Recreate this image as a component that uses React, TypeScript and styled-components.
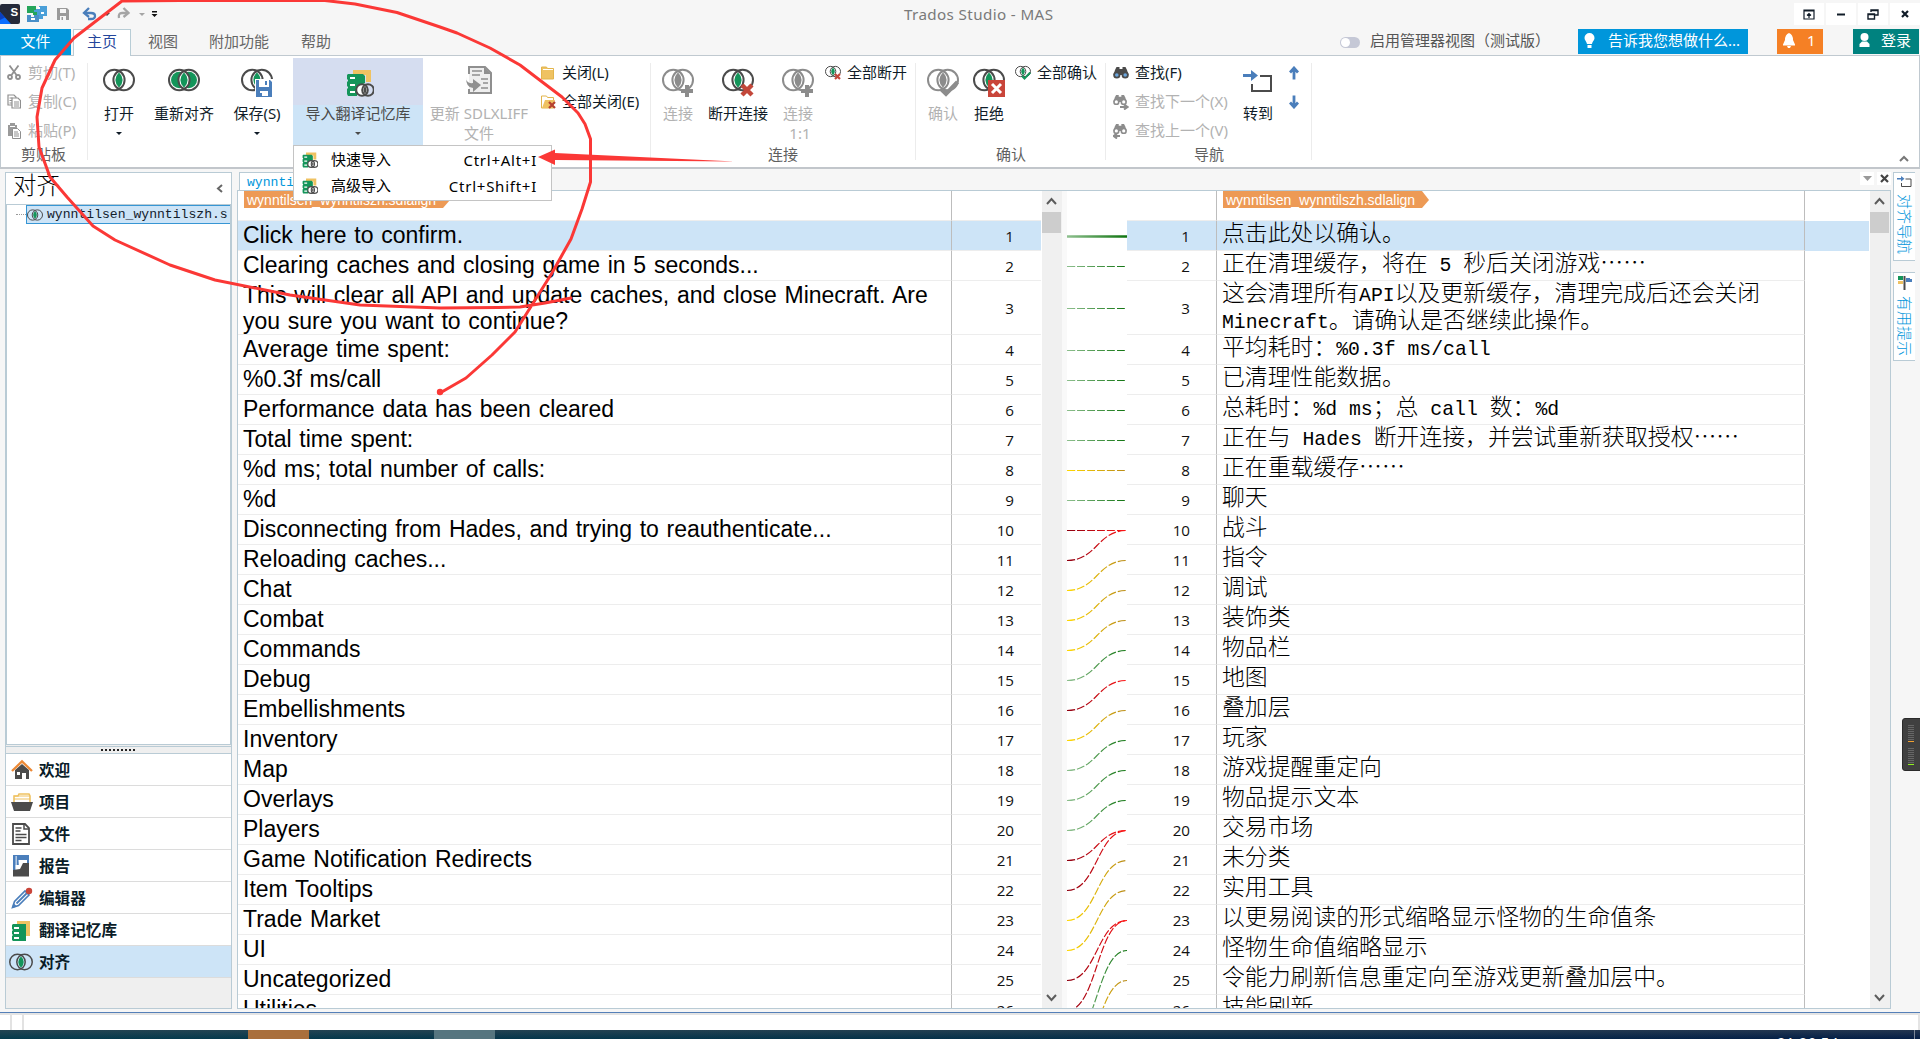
import React from "react";
import styled, { createGlobalStyle } from "styled-components";

const UI = `"Noto Sans", "Noto Sans CJK SC", sans-serif`;
const CJK = `"Noto Sans CJK SC", sans-serif`;

const Global = createGlobalStyle`
  html, body { margin: 0; padding: 0; overflow: hidden; }
  * { box-sizing: border-box; }
  body { font-family: ${UI}; font-size: 15px; color: #101c28; background: #f5f5f5; }
  svg { display: block; flex: none; }
`;

const Window = styled.div`
  position: relative;
  width: 1920px;
  height: 1039px;
  display: flex;
  flex-direction: column;
  overflow: hidden;
  background: #f6f6f6;
`;

/* ---------- title bar ---------- */
const TitleBar = styled.header`
  height: 29px;
  flex: none;
  display: flex;
  align-items: flex-start;
`;
const QuickAccess = styled.div`
  width: 904px;
  display: flex;
  padding-top: 4px;
`;
const Title = styled.div`
  flex: 1;
  line-height: 29px;
  font-size: 15.2px;
  letter-spacing: 0.38px;
  color: #7a7a7a;
  white-space: nowrap;
`;
const WindowButtons = styled.div`
  display: flex;
  gap: 2px;
  padding-top: 3px;
`;
const WinBtn = styled.div`
  width: 30px;
  height: 22px;
  background: #fff;
  display: flex;
  align-items: center;
  justify-content: center;
`;

/* ---------- tab strip ---------- */
const TabStrip = styled.nav`
  height: 27px;
  flex: none;
  display: flex;
  align-items: stretch;
  border-bottom: 1px solid #c0c9d0;
`;
const FileTab = styled.div`
  width: 71px;
  margin-right: 2px;
  background: #0096db;
  color: #fff;
  text-align: center;
  line-height: 24px;
`;
const ActiveTab = styled.div`
  width: 58px;
  margin-bottom: -1px;
  background: #fff;
  border: 1px solid #b8cdd6;
  border-bottom: 0;
  color: #24469c;
  text-align: center;
  line-height: 23px;
`;
const Tab = styled.div<{ $w: number }>`
  width: ${(p) => p.$w}px;
  line-height: 24px;
  color: #666;
  white-space: nowrap;
`;
const TabSpace = styled.div<{ $w?: number }>`
  flex: ${(p) => (p.$w ? "none" : 1)};
  width: ${(p) => p.$w ?? 0}px;
`;
const ToggleWrap = styled.div`
  width: 30px;
  padding-top: 8px;
`;
const Toggle = styled.div`
  width: 20px;
  height: 11px;
  border-radius: 6px;
  background: #c5c8d6;
  padding: 1px;
  &::before {
    content: "";
    display: block;
    width: 9px;
    height: 9px;
    border-radius: 50%;
    background: #fff;
  }
`;
const ManagerLabel = styled.div`
  width: 208px;
  line-height: 23px;
  color: #555;
  white-space: nowrap;
`;
const Chip = styled.div<{ $w: number; $bg: string; $gap: number; $pad: number }>`
  width: ${(p) => p.$w}px;
  height: 25px;
  background: ${(p) => p.$bg};
  color: #fff;
  display: flex;
  align-items: center;
  gap: ${(p) => p.$gap}px;
  padding: 0 0 2px ${(p) => p.$pad}px;
  line-height: 23px;
  white-space: nowrap;
`;

/* ---------- ribbon ---------- */
const Ribbon = styled.section`
  height: 113px;
  flex: none;
  display: flex;
  background: #fff;
  border: 1px solid #c0c9d0;
  border-top: 0;
  border-bottom: 2px solid #c2c6cb;
  padding: 2px 0 0 0;
`;
const Group = styled.div<{ $w: number }>`
  width: ${(p) => p.$w}px;
  height: 97px;
  margin-top: 5px;
  border-right: 1px solid #ececec;
  display: flex;
  flex-direction: column;
  flex: none;
`;
const GroupBody = styled.div`
  height: 82px;
  display: flex;
  margin-top: -5px;
`;
const GroupLabel = styled.div<{ $x: number }>`
  padding-left: ${(p) => p.$x}px;
  margin-top: 2px;
  line-height: 24px;
  color: #5f5f5f;
`;
const Big = styled.div<{ $w: number; $ml?: number; $off?: boolean }>`
  position: relative;
  width: ${(p) => p.$w}px;
  height: 88px;
  margin-left: ${(p) => p.$ml ?? 0}px;
  flex: none;
  display: flex;
  flex-direction: column;
  align-items: center;
  color: ${(p) => (p.$off ? "#b2b2b2" : "inherit")};
  text-align: center;
`;
const Active = styled(Big)`
  background: linear-gradient(#d5ddf0 0 47px, #cde4f7 47px);
  color: #4a4a4a;
`;
const BigIcon = styled.div<{ $top?: number; $dx?: number }>`
  height: 46px;
  padding-top: ${(p) => p.$top ?? 9}px;
  padding-left: ${(p) => p.$dx ?? 0}px;
`;
const BigText = styled.div`
  line-height: 19.5px;
  white-space: pre;
`;
const Caret = styled.i<{ $c?: string }>`
  margin-top: 8.5px;
  border: 3px solid transparent;
  border-top-color: ${(p) => p.$c ?? "#101c28"};
  border-bottom: 0;
`;
const SmallCol = styled.div<{ $ml: number; $gap: number }>`
  margin-left: ${(p) => p.$ml}px;
  display: flex;
  flex-direction: column;
  --gap: ${(p) => p.$gap}px;
`;
const Small = styled.div<{ $off?: boolean }>`
  height: 29px;
  flex: none;
  display: flex;
  align-items: center;
  gap: var(--gap);
  color: ${(p) => (p.$off ? "#b2b2b2" : "inherit")};
  white-space: nowrap;
  & > span { line-height: 20px; padding-bottom: 2px; }
`;
const Collapse = styled.div`
  flex: 1;
  display: flex;
  align-items: flex-end;
  justify-content: flex-end;
  padding: 0 10px 5px 0;
`;
const Menu = styled.div`
  position: absolute;
  z-index: 5;
  left: 0;
  top: 87px;
  width: 259px;
  height: 56px;
  background: #fff;
  border: 1px solid #c4c4c4;
  padding: 1px 14px 0 8px;
  color: #000;
`;
const MenuItem = styled.div`
  height: 26px;
  display: flex;
  align-items: center;
  font-size: 15px;
  & > span { line-height: 20px; padding-bottom: 2px; }
  & > span:last-child { margin-left: auto; letter-spacing: 0.75px; padding-bottom: 0; }
  & > svg + span { margin-left: 13px; }
`;

/* ---------- work area ---------- */
const Work = styled.main`
  height: 843px;
  flex: none;
  display: flex;
  padding: 3px 0 3px 5px;
`;
const Side = styled.aside`
  width: 227px;
  height: 837px;
  flex: none;
  display: flex;
  flex-direction: column;
  border: 1px solid #b9cbd5;
  background: #efefef;
`;
const SideHead = styled.div`
  height: 32px;
  flex: none;
  background: #fff;
  display: flex;
  justify-content: space-between;
  align-items: center;
  padding: 0 8px 1px 7px;
  border-bottom: 1px solid #b9cbd5;
  font-family: ${CJK};
  font-weight: 300;
  font-size: 23.5px;
  color: #000;
  & > span { line-height: 24px; padding-bottom: 8px; }
`;
const Tree = styled.div`
  height: 540px;
  flex: none;
  background: #fff;
  border: 1px solid #b9cbd5;
  border-top: 0;
  display: flex;
  align-items: flex-start;
  padding-left: 9px;
`;
const TreeDots = styled.div`
  width: 10px;
  margin-top: 9px;
  border-top: 1px dotted #999;
`;
const TreeItem = styled.div`
  flex: 1;
  height: 19px;
  overflow: hidden;
  display: flex;
  align-items: center;
  gap: 4px;
  border: 1px solid #3796d4;
  border-right: 0;
  background: #cde4f7;
  font: 13.1px "Liberation Mono", monospace;
  color: #12202c;
`;
const Splitter = styled.div`
  height: 8px;
  flex: none;
  display: flex;
  justify-content: center;
  align-items: flex-start;
  padding-top: 2px;
  border-top: 1px solid #b9cbd5;
  border-bottom: 1px solid #b9cbd5;
  margin-top: 1px;
`;
const Grip = styled.div`
  width: 34px;
  height: 2px;
  margin-right: 2px;
  background: repeating-linear-gradient(90deg, #222 0 2px, transparent 2px 4px);
`;
const NavItem = styled.div<{ $on?: boolean }>`
  height: 32px;
  flex: none;
  display: flex;
  align-items: center;
  background: ${(p) => (p.$on ? "#cde4f7" : "#fff")};
  border-bottom: 1px solid #dcdcdc;
  font-family: ${CJK};
  font-weight: 600;
  font-size: 15.6px;
  color: #0a1c28;
  padding-left: 3px;
  & > span { line-height: 20px; padding-bottom: 2px; }
`;
const NavIcon = styled.div<{ $pl: number }>`
  width: 30px;
  padding: 1px 0 0 ${(p) => p.$pl}px;
`;

const Editor = styled.section`
  width: 1654px;
  margin-left: 5px;
  flex: none;
  display: flex;
  flex-direction: column;
`;
const EditorTabs = styled.div`
  height: 18px;
  display: flex;
  justify-content: space-between;
`;
const DocTab = styled.div`
  width: 120px;
  margin-left: 2px;
  height: 18px;
  overflow: hidden;
  background: #fff;
  border: 1px solid #b9cbd5;
  border-bottom: 0;
  padding-left: 7px;
  font: 13.1px/20px "Liberation Mono", monospace;
  color: #0096db;
`;
const DocButtons = styled.div`
  display: flex;
  gap: 3px;
`;
const DocBtn = styled.div`
  width: 14px;
  height: 13px;
  background: #fff;
  display: flex;
  align-items: center;
  justify-content: center;
`;
const Frame = styled.div`
  height: 819px;
  display: flex;
  overflow: hidden;
  border: 1px solid #b9cbd5;
  background: #fff;
`;
const Grid = styled.div`
  flex: none;
  display: flex;
  flex-direction: column;
`;
const HeadRow = styled.div`
  height: 30px;
  flex: none;
  display: flex;
`;
const Row = styled.div<{ $h: number; $on: boolean }>`
  height: ${(p) => p.$h}px;
  flex: none;
  display: flex;
  background: ${(p) => (p.$on ? "#cde4f7" : "transparent")};
`;
const Line = styled.div<{ $w: number }>`
  width: ${(p) => p.$w}px;
  flex: none;
  border-bottom: 1px solid #ededed;
`;
const SourceCell = styled(Line)`
  border-right: 1px solid #bdbdbd;
  padding: 1px 0 0 5px;
  font: 23px/26px "Liberation Sans", Arial, sans-serif;
  word-spacing: 1.35px;
  color: #000;
  white-space: pre;
`;
const TargetCell = styled(Line)`
  border-right: 1px solid #bdbdbd;
  padding-left: 5px;
  font: 300 22.85px/27px ${CJK};
  color: #000;
  & > div { height: 27px; margin-top: -3px; white-space: pre; }
  & > div + div { margin-top: 0; }
`;
const Latin = styled.span`
  font-family: "Liberation Mono", monospace;
  font-weight: 400;
  font-size: 19.8px;
`;
const NumCell = styled(Line)<{ $pr: number; $br?: boolean }>`
  padding-right: ${(p) => p.$pr}px;
  border-right: ${(p) => (p.$br ? "1px solid #bdbdbd" : "0")};
  display: flex;
  align-items: center;
  justify-content: flex-end;
  font: 15.2px "Open Sans", sans-serif;
  color: #111;
`;
const Scroll = styled.div<{ $w: number }>`
  width: ${(p) => p.$w}px;
  flex: none;
  display: flex;
  flex-direction: column;
  align-items: center;
  justify-content: space-between;
  background: #f0f0f0;
  padding: 6px 1px 6px 0;
`;
const ThumbBox = styled.div`
  display: flex;
  flex-direction: column;
  align-items: center;
  gap: 7px;
`;
const Thumb = styled.div`
  width: 19px;
  height: 21px;
  background: #cdcdcd;
`;
const Gutter = styled.div`
  width: 5px;
  background: #f9f9f9;
`;
const Badge = styled.div<{ $ml: number }>`
  height: 17px;
  margin-left: ${(p) => p.$ml}px;
  width: 206px;
  background: #ed9a55;
  clip-path: polygon(0 0, 199px 0, 206px 9px, 199px 17px, 0 17px);
  padding-left: 3px;
  font: 14px/18px "Liberation Sans", Arial, sans-serif;
  color: #fff;
`;
const HeadCell = styled.div<{ $w: number; $line?: boolean }>`
  width: ${(p) => p.$w}px;
  flex: none;
  border-right: ${(p) => (p.$line ? "1px solid #bdbdbd" : "0")};
  border-bottom: 1px solid #ededed;
`;
const Plain = styled.div<{ $w: number }>`
  width: ${(p) => p.$w}px;
`;

const Rail = styled.div`
  margin-left: 2px;
  display: flex;
  flex-direction: column;
  gap: 11px;
`;
const RailTab = styled.div<{ $h: number }>`
  width: 22px;
  height: ${(p) => p.$h}px;
  border: 1px solid #b9cbd5;
  border-right: 0;
  background: #fff;
  display: flex;
  flex-direction: column;
  align-items: center;
  gap: 6px;
  padding-top: 3px;
`;
const RailText = styled.div`
  writing-mode: vertical-rl;
  text-orientation: sideways;
  font: 300 15px/20px ${CJK};
  color: #0096db;
`;
const Meter = styled.div`
  position: absolute;
  left: 1902px;
  top: 718px;
  width: 20px;
  height: 53px;
  border: 1px solid #2a2a2a;
  border-radius: 3px 0 0 3px;
  background: #404040;
  padding: 6px 0 0 5px;
`;
const Bars = styled.div<{ $c: string }>`
  width: 6px;
  height: 17px;
  margin-bottom: 6px;
  background: linear-gradient(transparent 16px, ${(p) => p.$c} 16px), repeating-linear-gradient(#666 0 1px, #404040 1px 2px);
`;

/* ---------- bottom ---------- */
const Status = styled.footer`
  height: 17px;
  flex: none;
  display: flex;
  background: #fff;
  border-top: 2px solid #e4e4e4;
  border-right: 2px solid #e4e4e4;
  padding-left: 10px;
  gap: 10px;
  & > i { width: 2px; background: #e2e2e2; }
`;
const BlueLine = styled.div`
  height: 1px;
  flex: none;
  background: #5580b8;
`;
const TaskBar = styled.div`
  height: 10px;
  flex: none;
  display: flex;
  overflow: hidden;
  background: linear-gradient(rgba(70, 80, 90, 0.5), transparent), linear-gradient(90deg, #003a4c, #003048 45%, #001a45);
`;
const Task = styled.div<{ $w: number; $c?: string }>`
  width: ${(p) => p.$w}px;
  flex: none;
  background: ${(p) => p.$c ?? "transparent"};
`;
const Clock = styled.div`
  width: 137px;
  padding-top: 4px;
  font: 15.5px/20px "Open Sans", sans-serif;
  color: #fff;
`;
const ShowDesktop = styled.div`
  width: 6px;
  border-left: 1px solid #7c8798;
`;
const Ink = styled.svg`
  position: absolute;
  left: 0;
  top: 0;
  z-index: 10;
  pointer-events: none;
`;

/* ---------- icons ---------- */
type VennProps = { w?: number; color?: string; lens?: string; sides?: boolean; badge?: React.ReactNode };
const Venn = ({ w = 32, color = "#4b4b4b", lens = "#14955a", sides, badge }: VennProps) => (
  <svg width={w} height={(w * 30) / 32} viewBox="0 0 32 30">
    {sides && (
      <g fill={lens}>
        <circle cx="11.3" cy="13" r="8.3" />
        <circle cx="20.7" cy="13" r="8.3" />
        <path d="M16 2.5Q26.5 13 16 23.5Q5.500 13 16 2.500Z" fill="#fff" />
      </g>
    )}
    <path d="M16 5.200Q23.300 13 16 20.800Q8.700 13 16 5.200Z" fill={lens} />
    <g fill="none" stroke={color} strokeWidth="2">
      <circle cx="11.300" cy="13" r="10.300" />
      <circle cx="20.700" cy="13" r="10.300" />
    </g>
    {badge}
  </svg>
);
/* small Venn centred on its circles, for list rows */
const VennFlat = ({ w }: { w: number }) => (
  <svg width={w} height={(w * 24) / 32} viewBox="0 1 32 24">
    <path d="M16 5.200Q23.300 13 16 20.800Q8.700 13 16 5.200Z" fill="#14955a" />
    <g fill="none" stroke="#4b4b4b" strokeWidth="2">
      <circle cx="11.300" cy="13" r="10.300" />
      <circle cx="20.700" cy="13" r="10.300" />
    </g>
  </svg>
);
const Plus = <path d="M19 24h12M25 18v12" stroke="#8c8c8c" strokeWidth="4" />;
const Cross = <path d="M20 18l10 10M30 18l-10 10" stroke="#c3473a" strokeWidth="4.400" />;
const RejectBox = (
  <g>
    <rect x="15" y="13" width="17" height="17" fill="#c9453a" />
    <path d="M19 17l9 9M28 17l-9 9" stroke="#fff" strokeWidth="3" />
  </g>
);
const Tick = (c: string) => <path d="M14 22l5 5L30.500 15" fill="none" stroke={c} strokeWidth="4" />;
const Disk = (
  <g>
    <path d="M14 12h18v18h-18z" fill="#fff" />
    <path d="M15 13h3v7h10v-7h1l2 2v15h-16z" fill="#4a7ebb" />
    <path d="M18 13h9v6h-9z" fill="#fff" />
    <path d="M24 14h2v4h-2z" fill="#4a7ebb" />
    <path d="M19 24h8v5h-6v-3h-2z" fill="#fff" />
  </g>
);

const MemoryIcon = ({ w = 28 }: { w?: number }) => (
  <svg width={w} height={w} viewBox="0 0 28 28">
    <path d="M7 1h18v12h-5V6H7z" fill="#efc262" />
    <path d="M2 5h15l2 2v7l-8 4v9H2l-1-2v-5l1-1v-1l-1-1v-4l1-1v-1L1 10V6z" fill="#14955a" />
    <path d="M4 9h5M4 16h5M4 23h5" stroke="#fff" strokeWidth="2" />
    <g fill="#fff" stroke="#4b4b4b" strokeWidth="2">
      <circle cx="16" cy="21" r="5.800" />
      <circle cx="22" cy="21" r="5.800" fill="none" />
    </g>
    <path d="M19 17q3 4 0 8q-3-4 0-8" fill="#4b4b4b" />
  </svg>
);
const UpdateIcon = () => (
  <svg width="28" height="30" viewBox="0 0 28 30">
    <path d="M4 9V2h16l6 6v20H4v-4" fill="#eee" stroke="#8f8f8f" strokeWidth="2" />
    <path d="M19 2v7h7z" fill="#8f8f8f" />
    <path d="M7 6h10M7 10h8M16 14h7M18 18h5M16 23h7" stroke="#8f8f8f" strokeWidth="1.600" />
    <path d="M1 12q0 7 7 6v-4l8 6-8 7v-4Q1 23 1 12z" fill="#8f8f8f" />
  </svg>
);
const Scissors = () => (
  <svg width="14" height="15" viewBox="0 0 14 15" fill="none" stroke="#8f8f8f" strokeWidth="1.800">
    <path d="M2.500 0.500L9.500 10M11.500 0.500L4.500 10" />
    <circle cx="3" cy="12" r="2" />
    <circle cx="11" cy="12" r="2" />
  </svg>
);
const CopyIcon = () => (
  <svg width="14" height="15" viewBox="0 0 14 15" fill="#fff" stroke="#8f8f8f" strokeWidth="1.200">
    <path d="M1 1h6l2 2v8H1zM2.500 4h3M2.500 6.500h3M2.500 9h3" />
    <path d="M5 4h6l2.500 2.500V14H5zM7 8h5M7 10h5M7 12h5" />
  </svg>
);
const PasteIcon = () => (
  <svg width="14" height="17" viewBox="0 0 14 17">
    <path d="M1 3h2V1h5v2h2v4H5v7H1z" fill="#9a9a9a" />
    <path d="M3 4.500h5" stroke="#fff" />
    <path d="M5.500 6.500h5l3 3v7h-8z" fill="#fff" stroke="#8f8f8f" />
    <path d="M7 10h4M7 12h5M7 14h5" stroke="#8f8f8f" />
  </svg>
);
const FolderIcon = ({ x }: { x?: boolean }) => (
  <svg width="15" height="14" viewBox="0 0 15 14">
    <path d="M.5 13V1h5l1 1.500h6V13z" fill={x ? "#fff" : "#efc262"} stroke="#e2b54c" />
    {x ? <path d="M1 13L4 5h10l-2 8z" fill="#efc262" /> : <path d="M2 3.500h10" stroke="#fff" />}
    {x && <path d="M8 7l6 6M14 7l-6 6" stroke="#b5402f" strokeWidth="2.200" />}
  </svg>
);
const Binoculars = ({ c = "#4b4b4b", eye = "#6aa5dc", dir = 0 }: { c?: string; eye?: string; dir?: number }) => (
  <svg width="16" height="16" viewBox="0 0 16 16">
    <g transform={dir ? "scale(.88)" : "translate(0 1)"}>
      <path d="M2 4L3.500 1h3v2h3V1h3L14 4l1.500 5H.5z" fill={c} />
      <circle cx="3.800" cy="9" r="3.600" fill={c} />
      <circle cx="12.200" cy="9" r="3.600" fill={c} />
      <circle cx="3.800" cy="9" r="1.800" fill={eye} />
      <circle cx="12.200" cy="9" r="1.800" fill={eye} />
    </g>
    {dir === 1 && <path d="M7 13h6M11 10.500l3.500 2.500-3.500 2.500" fill="none" stroke={c} strokeWidth="2" />}
    {dir === -1 && <path d="M7 13H1.500M4 10.500L.8 13 4 15.500" fill="none" stroke={c} strokeWidth="2" />}
  </svg>
);
const GotoIcon = ({ w = 30 }: { w?: number }) => (
  <svg width={w} height={(w * 24) / 30} viewBox="0 0 30 24">
    <path d="M17 6h11v15H9v-7" fill="none" stroke="#4b4b4b" strokeWidth="2" />
    <path d="M0 4h8V0l7 5.500L8 11V7H0z" fill="#4a7ebb" />
  </svg>
);
const ArrowUp = () => (
  <svg width="10" height="14" viewBox="0 0 10 14">
    <path d="M5 13.500V3M1 6.500L5 2l4 4.500" fill="none" stroke="#4a7ebb" strokeWidth="2.800" />
  </svg>
);
const ArrowDown = () => (
  <svg width="10" height="14" viewBox="0 0 10 14">
    <path d="M5 .5V11M1 7.500L5 12l4-4.500" fill="none" stroke="#4a7ebb" strokeWidth="2.800" />
  </svg>
);
const Chevron = ({ d, w = 11, h = 8, c = "#5c5c5c", s = 2 }: { d: string; w?: number; h?: number; c?: string; s?: number }) => (
  <svg width={w} height={h} viewBox={`0 0 ${w} ${h}`}>
    <path d={d} fill="none" stroke={c} strokeWidth={s} />
  </svg>
);
const UP = "M1 7L5.500 2L10 7";
const DOWN = "M1 1L5.500 6L10 1";

const QuickIcons = () => (
  <svg width="165" height="22" viewBox="0 4 165 22">
    <rect x="0" y="4" width="20" height="20" rx="2" fill="#252a3a" />
    <path d="M0 12v12h11z" fill="#0a6cff" />
    <path d="M0 12l5 5.500L0 20z" fill="#0b3fc0" />
    <text x="10.500" y="15.500" fontFamily="Liberation Sans" fontWeight="700" fontSize="11.500" fill="#fff">S</text>
    <path d="M27 6h9v3h3V6h8v10h-4v3h-4v-4h-3v-3h-9z" fill="#4a9fd8" />
    <path d="M27 6h9v4h-2v2h3v3h-4v-2h-6z" fill="#25a55a" />
    <path d="M27 15h4v2h3v-2h5v7H27z" fill="#4a8fc8" />
    <path d="M31 19h4M38 8h2M41 13h3" stroke="#fff" strokeWidth="2" />
    <path d="M57 8h10l2 2v10H57z" fill="#9a9a9a" />
    <path d="M60 9h6v4h-6zM60 16h6v4h-6z" fill="#f6f6f6" />
    <path d="M61.500 17h1.500v3h-1.500z" fill="#9a9a9a" />
    <path d="M85 13h6q4 0 4 3t-4 3h-3" fill="none" stroke="#4a7ebb" strokeWidth="2.300" />
    <path d="M89 8l-5 5 5 4" fill="none" stroke="#4a7ebb" strokeWidth="2.300" />
    <path d="M104 13h6l-3 3z" fill="#444" />
    <path d="M128 13h-6q-4 0-3 5" fill="none" stroke="#a5a5a5" strokeWidth="2.300" />
    <path d="M123.500 8l5 5-5 4" fill="none" stroke="#a5a5a5" strokeWidth="2.300" />
    <path d="M139 13h6l-3 3z" fill="#a5a5a5" />
    <path d="M152 11h5v1.500h-5zM151.500 14h6l-3 3z" fill="#111" />
  </svg>
);

const HomeI = () => (
  <svg width="22" height="22" viewBox="0 0 22 22">
    <path d="M4 11l7-6 7 6v9h-3v-6h-4v6H4z" fill="#4b4b4b" />
    <path d="M6 13h3v3H6z" fill="#fff" />
    <path d="M1 12L11 2.500 21 12" fill="none" stroke="#ec8936" strokeWidth="2.400" />
  </svg>
);
const ProjectI = () => (
  <svg width="22" height="22" viewBox="0 0 22 22">
    <path d="M3 11V5h4l1-2h10l1 2v6" fill="#fff" stroke="#efc262" strokeWidth="1.600" />
    <path d="M3 5h16M3 8h16" stroke="#efc262" />
    <path d="M0 11h22l-3 9H3z" fill="#4b4b4b" />
  </svg>
);
const FileI = () => (
  <svg width="20" height="22" viewBox="0 0 20 22">
    <path d="M2 1h12l4 4v16H2z" fill="#fff" stroke="#4b4b4b" strokeWidth="1.800" />
    <path d="M13 1v5h5M4.500 5h6M4.500 8h5M4.500 11.500h11M4.500 14.500h11M4.500 17.500h6" fill="none" stroke="#4b4b4b" strokeWidth="1.500" />
  </svg>
);
const ReportI = () => (
  <svg width="20" height="22" viewBox="0 0 20 22">
    <path d="M2 0h16v10H2z" fill="#4a7ebb" />
    <path d="M5 1v13" stroke="#fff" strokeWidth="1.200" />
    <path d="M2 1h2.400v14H2z" fill="#4a7ebb" />
    <path d="M7.500 5H16v3l-3 1-5 4.500z" fill="#fff" />
    <path d="M2 21.500V15l7-1 3-6h6v13.500z" fill="#4b4b4b" />
  </svg>
);
const PencilI = () => (
  <svg width="22" height="22" viewBox="0 0 22 22">
    <path d="M1.500 20.500l2-6L14 4l4 4L7.500 18.500z" fill="#fff" stroke="#4a7ebb" strokeWidth="1.600" />
    <path d="M5.500 16.500L16 6" stroke="#4a7ebb" strokeWidth="1.800" />
    <path d="M1 21l1.500-5 3.500 3.500z" fill="#4a7ebb" />
    <circle cx="18" cy="4" r="3.200" fill="#c9453a" />
  </svg>
);
const MemI = () => (
  <svg width="20" height="22" viewBox="0 0 20 22">
    <path d="M6 2h13v15h-5V6H6z" fill="#efc262" />
    <path d="M2 5h13v17H2l-1-1v-4l1-1-1-1v-3l1-1-1-1V6z" fill="#14955a" />
    <path d="M3 9h5M3 14h5M3 19h5" stroke="#fff" strokeWidth="2" />
  </svg>
);

/* ---------- data ---------- */
const source = [
  "Click here to confirm.",
  "Clearing caches and closing game in 5 seconds...",
  "This will clear all API and update caches, and close Minecraft. Are\nyou sure you want to continue?",
  "Average time spent:",
  "%0.3f ms/call",
  "Performance data has been cleared",
  "Total time spent:",
  "%d ms; total number of calls:",
  "%d",
  "Disconnecting from Hades, and trying to reauthenticate...",
  "Reloading caches...",
  "Chat", "Combat", "Commands", "Debug", "Embellishments", "Inventory", "Map", "Overlays", "Players",
  "Game Notification Redirects", "Item Tooltips", "Trade Market", "UI", "Uncategorized", "Utilities",
];
const target = [
  "点击此处以确认。",
  "正在清理缓存，将在 5 秒后关闭游戏……",
  "这会清理所有API以及更新缓存，清理完成后还会关闭\nMinecraft。请确认是否继续此操作。",
  "平均耗时：%0.3f ms/call",
  "已清理性能数据。",
  "总耗时：%d ms；总 call 数：%d",
  "正在与 Hades 断开连接，并尝试重新获取授权……",
  "正在重载缓存……",
  "聊天", "战斗", "指令", "调试", "装饰类", "物品栏", "地图", "叠加层", "玩家",
  "游戏提醒重定向", "物品提示文本", "交易市场", "未分类", "实用工具",
  "以更易阅读的形式缩略显示怪物的生命值条",
  "怪物生命值缩略显示",
  "令能力刷新信息重定向至游戏更新叠加层中。",
  "技能刷新",
];
const rowHeight = (i: number) => (i === 2 ? 54 : 30);
const center = (n: number) => (n === 1 ? 45.5 : n === 2 ? 75.5 : n === 3 ? 117.5 : 159.5 + (n - 4) * 30);
const links: [number, number, string][] = [
  [2, 2, "g"], [3, 3, "g"], [4, 4, "g"], [5, 5, "g"], [6, 6, "g"], [7, 7, "g"], [8, 8, "y"], [9, 9, "g"],
  [10, 10, "r"], [11, 10, "r"], [12, 11, "y"], [13, 12, "y"], [14, 13, "y"], [15, 14, "g"], [16, 15, "r"],
  [17, 16, "y"], [18, 17, "g"], [19, 18, "g"], [20, 19, "g"], [21, 20, "r"], [22, 20, "r"], [23, 21, "y"],
  [24, 22, "y"], [25, 23, "r"], [26, 23, "r"], [27, 24, "g"], [28, 25, "y"],
];
const ramps: Record<string, [string, string]> = {
  g: ["#8fc08f", "#0e730e"],
  y: ["#ffd800", "#b88a18"],
  r: ["#8f0010", "#ff1616"],
};

const mixed = (line: string) =>
  line.split(/([\x20-\x7e]+)/).map((part, i) => (i % 2 ? <Latin key={i}>{part}</Latin> : part));

const Links = () => (
  <svg width="60" height="817" viewBox="0 0 60 817">
    <defs>
      {Object.entries(ramps).map(([k, [a, b]]) => (
        <linearGradient key={k} id={k} gradientUnits="userSpaceOnUse" x1="0" y1="0" x2="60" y2="0">
          <stop offset="0" stopColor={a} />
          <stop offset="1" stopColor={b} />
        </linearGradient>
      ))}
    </defs>
    <path d="M0 45.500H60" stroke="url(#g)" strokeWidth="2.400" />
    {links.map(([a, b, k]) => (
      <path
        key={`${a}-${b}`}
        d={`M0 ${center(a)}C30 ${center(a)} 30 ${center(b)} 60 ${center(b)}`}
        fill="none"
        stroke={`url(#${k})`}
        strokeWidth="1.150"
        strokeDasharray="8 2"
      />
    ))}
  </svg>
);

const ScrollBar = ({ w }: { w: number }) => (
  <Scroll $w={w}>
    <ThumbBox>
      <Chevron d={UP} />
      <Thumb />
    </ThumbBox>
    <Chevron d={DOWN} />
  </Scroll>
);

const navItems: [string, React.ReactNode][] = [
  ["欢迎", <HomeI />], ["项目", <ProjectI />], ["文件", <FileI />], ["报告", <ReportI />],
  ["编辑器", <PencilI />], ["翻译记忆库", <MemI />],
];

export default function App() {
  return (
    <Window>
      <Global />
      <TitleBar>
        <QuickAccess><QuickIcons /></QuickAccess>
        <Title>Trados Studio - MAS</Title>
        <WindowButtons>
          <WinBtn>
            <svg width="12" height="11" viewBox="0 0 12 11"><path d="M1 1h10v9H1zM1 2h10M6 9V4.500M4 6.500l2-2 2 2" fill="none" stroke="#111c28" strokeWidth="1.200" /></svg>
          </WinBtn>
          <WinBtn><svg width="8" height="3"><path d="M0 1.500h8" stroke="#111c28" strokeWidth="2" /></svg></WinBtn>
          <WinBtn>
            <svg width="12" height="11" viewBox="0 0 12 11"><path d="M4 3V1h7v5H8M1 5h6.500v5H1zM1 5.500h6M4 1.500h7" fill="none" stroke="#111c28" strokeWidth="1.400" /></svg>
          </WinBtn>
          <WinBtn><svg width="8" height="8"><path d="M1 1l6 6M7 1L1 7" stroke="#111c28" strokeWidth="2.200" /></svg></WinBtn>
        </WindowButtons>
      </TitleBar>

      <TabStrip>
        <FileTab>文件</FileTab>
        <ActiveTab>主页</ActiveTab>
        <TabSpace $w={17} />
        <Tab $w={61}>视图</Tab>
        <Tab $w={92}>附加功能</Tab>
        <Tab $w={60}>帮助</Tab>
        <TabSpace />
        <ToggleWrap><Toggle /></ToggleWrap>
        <ManagerLabel>启用管理器视图（测试版）</ManagerLabel>
        <Chip $w={170} $bg="#0096db" $gap={13} $pad={6}>
          <svg width="11" height="15" viewBox="0 0 11 15"><path d="M5.500 0a5 5 0 0 1 5 5c0 2.500-2 3-2.500 6H3C2.500 8 .5 7.500.5 5a5 5 0 0 1 5-5zM3.500 12h4v3h-4z" fill="#fff" /></svg>
          告诉我您想做什么...
        </Chip>
        <TabSpace $w={29} />
        <Chip $w={46} $bg="#f58025" $gap={12} $pad={6}>
          <svg width="12" height="15" viewBox="0 0 12 15"><path d="M6 0q4 1.500 4 7l2 4.500v1H0v-1L2 7Q2 1.500 6 0zM4 13h4l-1 2H5z" fill="#fff" /></svg>
          1
        </Chip>
        <TabSpace $w={30} />
        <Chip $w={66} $bg="#00827f" $gap={11} $pad={6}>
          <svg width="11" height="15" viewBox="0 0 11 15"><circle cx="5.500" cy="4" r="4" fill="#fff" /><path d="M.5 14V11l2.500-2.500h5L10.500 11v3z" fill="#fff" /></svg>
          登录
        </Chip>
        <TabSpace $w={1} />
      </TabStrip>

      <Ribbon>
        <Group $w={87}>
          <GroupBody>
            <SmallCol $ml={6} $gap={7}>
              <Small $off><Scissors /><span>剪切(T)</span></Small>
              <Small $off><CopyIcon /><span>复制(C)</span></Small>
              <Small $off><PasteIcon /><span>粘贴(P)</span></Small>
            </SmallCol>
          </GroupBody>
          <GroupLabel $x={20}>剪贴板</GroupLabel>
        </Group>
        <Group $w={563}>
          <GroupBody>
            <Big $w={44} $ml={9}><BigIcon><Venn /></BigIcon><BigText>打开</BigText><Caret /></Big>
            <Big $w={78} $ml={4}><BigIcon><Venn sides /></BigIcon><BigText>重新对齐</BigText></Big>
            <Big $w={56} $ml={6}><BigIcon><Venn badge={Disk} /></BigIcon><BigText>保存(S)</BigText><Caret /></Big>
            <Active $w={130} $ml={8}>
              <BigIcon $top={11} $dx={3}><MemoryIcon /></BigIcon><BigText>导入翻译记忆库</BigText><Caret $c="#4a4a4a" />
              <Menu>
                <MenuItem><MemoryIcon w={16} /><span>快速导入</span><span>Ctrl+Alt+I</span></MenuItem>
                <MenuItem><MemoryIcon w={16} /><span>高级导入</span><span>Ctrl+Shift+I</span></MenuItem>
              </Menu>
            </Active>
            <Big $w={108} $ml={2} $off><BigIcon $top={7}><UpdateIcon /></BigIcon><BigText>{"更新 SDLXLIFF\n文件"}</BigText></Big>
            <SmallCol $ml={8} $gap={6}>
              <Small><FolderIcon /><span>关闭(L)</span></Small>
              <Small><FolderIcon x /><span>全部关闭(E)</span></Small>
            </SmallCol>
          </GroupBody>
        </Group>
        <Group $w={265}>
          <GroupBody>
            <Big $w={44} $ml={5} $off><BigIcon><Venn color="#8c8c8c" lens="#8c8c8c" badge={Plus} /></BigIcon><BigText>连接</BigText></Big>
            <Big $w={66} $ml={5}><BigIcon><Venn badge={Cross} /></BigIcon><BigText>断开连接</BigText></Big>
            <Big $w={44} $ml={5} $off><BigIcon><Venn color="#8c8c8c" lens="#8c8c8c" badge={Plus} /></BigIcon><BigText>{"连接\n 1:1"}</BigText></Big>
            <SmallCol $ml={5} $gap={6}>
              <Small><Venn w={16} badge={Cross} /><span>全部断开</span></Small>
            </SmallCol>
          </GroupBody>
          <GroupLabel $x={117}>连接</GroupLabel>
        </Group>
        <Group $w={190}>
          <GroupBody>
            <Big $w={44} $ml={5} $off><BigIcon><Venn color="#8c8c8c" lens="#8c8c8c" badge={Tick("#8c8c8c")} /></BigIcon><BigText>确认</BigText></Big>
            <Big $w={44} $ml={2}><BigIcon><Venn badge={RejectBox} /></BigIcon><BigText>拒绝</BigText></Big>
            <SmallCol $ml={4} $gap={6}>
              <Small><Venn w={16} badge={Tick("#14955a")} /><span>全部确认</span></Small>
            </SmallCol>
          </GroupBody>
          <GroupLabel $x={80}>确认</GroupLabel>
        </Group>
        <Group $w={206}>
          <GroupBody>
            <SmallCol $ml={7} $gap={6}>
              <Small><Binoculars /><span>查找(F)</span></Small>
              <Small $off><Binoculars c="#8c8c8c" eye="#fff" dir={1} /><span>查找下一个(X)</span></Small>
              <Small $off><Binoculars c="#8c8c8c" eye="#fff" dir={-1} /><span>查找上一个(V)</span></Small>
            </SmallCol>
            <Big $w={44} $ml={8}><BigIcon $top={12}><GotoIcon /></BigIcon><BigText>转到</BigText></Big>
            <SmallCol $ml={9} $gap={0}>
              <Small><ArrowUp /></Small>
              <Small><ArrowDown /></Small>
            </SmallCol>
          </GroupBody>
          <GroupLabel $x={88}>导航</GroupLabel>
        </Group>
        <Collapse><Chevron d="M1 6L5 2L9 6" w={10} h={7} c="#777" /></Collapse>
      </Ribbon>

      <Work>
        <Side>
          <SideHead><span>对齐</span><Chevron d="M6 1L2 4.500L6 8" w={7} h={9} c="#666" /></SideHead>
          <Tree>
            <TreeDots />
            <TreeItem><VennFlat w={16} />wynntilsen_wynntilszh.s</TreeItem>
          </Tree>
          <Splitter><Grip /></Splitter>
          {navItems.map(([name, icon]) => (
            <NavItem key={name}><NavIcon $pl={2}>{icon}</NavIcon><span>{name}</span></NavItem>
          ))}
          <NavItem $on><NavIcon $pl={0}><VennFlat w={24} /></NavIcon><span>对齐</span></NavItem>
        </Side>

        <Editor>
          <EditorTabs>
            <DocTab>wynntilsen_wynntilszh</DocTab>
            <DocButtons>
              <DocBtn><svg width="9" height="5"><path d="M0 0h9L4.500 5z" fill="#999" /></svg></DocBtn>
              <DocBtn><svg width="9" height="9"><path d="M1 1l7 7M8 1L1 8" stroke="#444" strokeWidth="2.200" /></svg></DocBtn>
            </DocButtons>
          </EditorTabs>
          <Frame>
            <Grid>
              <HeadRow>
                <HeadCell $w={714} $line><Badge $ml={6}>wynntilsen_wynntilszh.sdlalign</Badge></HeadCell>
                <HeadCell $w={89} />
              </HeadRow>
              {source.map((text, i) => (
                <Row key={i} $h={rowHeight(i)} $on={i === 0}>
                  <SourceCell $w={714}>{text}</SourceCell>
                  <NumCell $w={89} $pr={27}>{i + 1}</NumCell>
                </Row>
              ))}
            </Grid>
            <Plain $w={1} />
            <ScrollBar w={20} />
            <Gutter />
            <Links />
            <Grid>
              <HeadRow>
                <HeadCell $w={90} $line />
                <HeadCell $w={588} $line><Badge $ml={6}>wynntilsen_wynntilszh.sdlalign</Badge></HeadCell>
              </HeadRow>
              {target.map((text, i) => (
                <Row key={i} $h={rowHeight(i)} $on={i === 0}>
                  <NumCell $w={90} $pr={26} $br>{i + 1}</NumCell>
                  <TargetCell $w={588}>
                    {text.split("\n").map((line) => <div key={line}>{mixed(line)}</div>)}
                  </TargetCell>
                  <Plain $w={64} />
                </Row>
              ))}
            </Grid>
            <Plain $w={1} />
            <ScrollBar w={20} />
          </Frame>
        </Editor>

        <Rail>
          <RailTab $h={89}><GotoIcon w={15} /><RailText>对齐导航</RailText></RailTab>
          <RailTab $h={89}>
            <svg width="15" height="14" viewBox="0 0 15 14"><path d="M1 0h5v4H1z" fill="#14955a" /><path d="M1 5h5v3H1z" fill="#efc262" /><path d="M7.500 0v14" stroke="#4b4b4b" strokeWidth="2" /><path d="M9 2h4v1h2v3H9z" fill="#4a7ebb" /></svg>
            <RailText>有用提示</RailText>
          </RailTab>
        </Rail>
      </Work>

      <BlueLine />
      <Status><i /><i /></Status>
      <TaskBar>
        <Task $w={248} />
        <Task $w={61} $c="#a96f3c" />
        <Task $w={125} />
        <Task $w={61} $c="#56757f" />
        <Task $w={1282} />
        <Clock>21:20:54</Clock>
        <ShowDesktop />
      </TaskBar>

      <Meter><Bars $c="#f0a030" /><Bars $c="#90f020" /></Meter>

      <Ink width="1920" height="500" viewBox="0 0 1920 500">
        <g fill="none" stroke="#fb3836" strokeWidth="3" strokeLinejoin="round" strokeLinecap="round">
          <path d="M571 298L545 303L520 307L498 307.500L440 308L360 305L290 295L215 280L170 265L115 240L93 226L67 197L50 177L39 147L37 117L42 88L55 60L74 38L122 1L180 0.500L325 0.500L355 4L397 12.500L440 27L457 33L490 48L520 65L537 78L562 97L578 113L585 124L590.500 139L590.500 182L582 209L571 239L552 273L515 332L492 355L466 378L440 393" />
        </g>
        <circle cx="440" cy="392" r="3.200" fill="#fb3836" />
        <path d="M538 157L555 149.500V153L735 161.500L555 160V165z" fill="#fb3836" />
      </Ink>
    </Window>
  );
}
